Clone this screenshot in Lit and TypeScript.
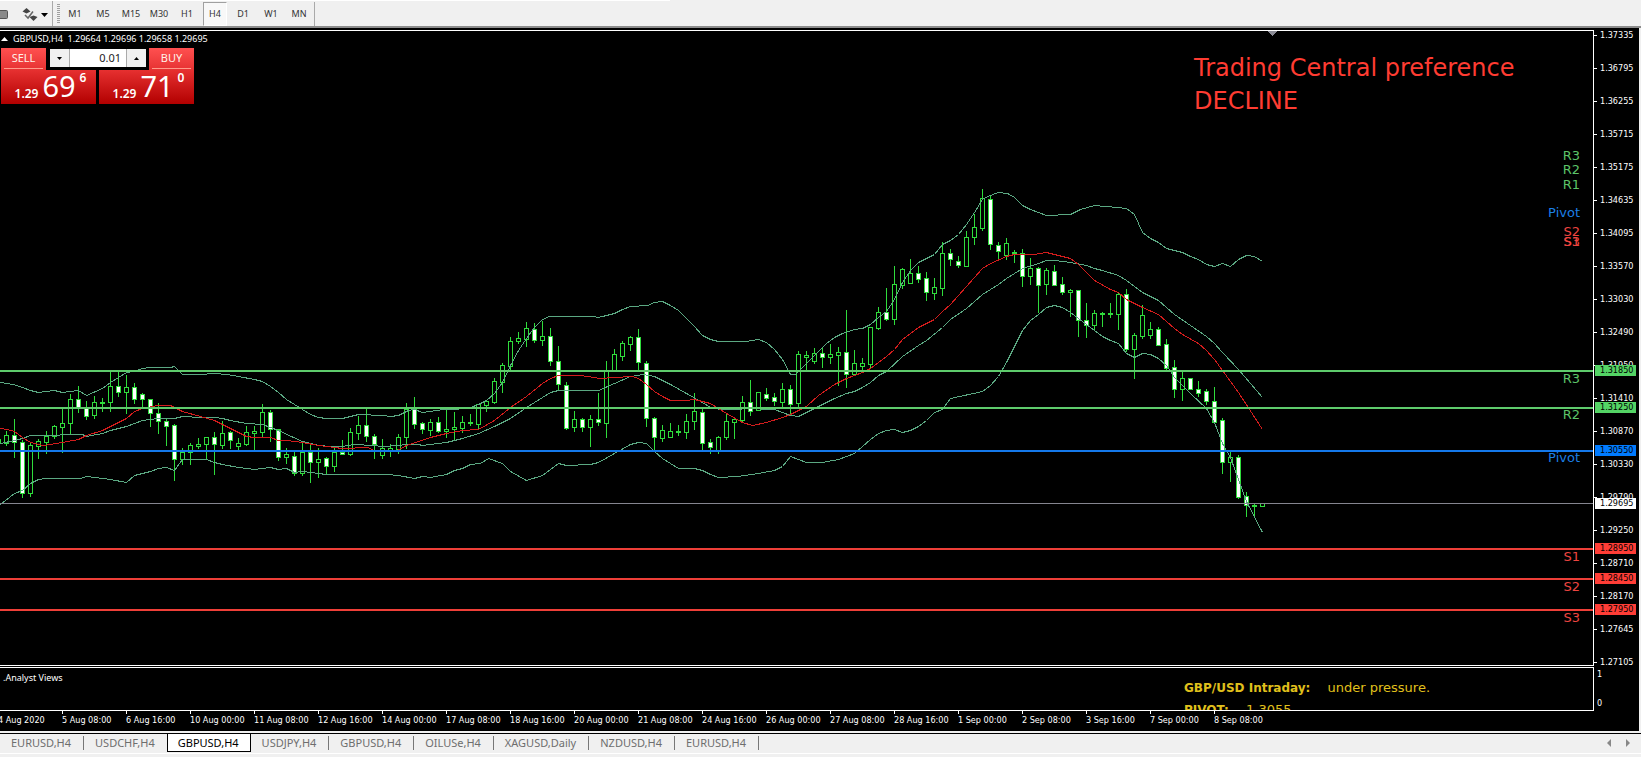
import { LitElement, html, svg, css } from "lit";
import { customElement, state } from "lit/decorators.js";
import { classMap } from "lit/directives/class-map.js";

// One bar every 8px: high, body top, body bottom, low, 1 = falling bar.
const BARS: number[][] = [
  [439,439,443,443,0],
  [431,435,443,445,0],[419,435,442,457,1],[440,442,493,497,1],[442,445,493,496,0],[439,441,446,458,0],
  [431,436,442,453,0],[425,426,436,438,0],[408,423,427,452,0],[394,399,423,433,0],[386,399,407,412,1],
  [401,408,416,419,1],[396,402,415,418,0],[398,402,403,411,0],[371,386,402,411,0],[371,386,392,396,1],
  [375,387,392,413,0],[383,387,399,403,1],[393,394,399,408,1],[399,399,413,426,1],[403,413,421,433,1],
  [418,421,426,445,1],[424,425,459,480,1],[448,452,459,464,0],[443,445,452,464,0],[438,444,446,448,0],
  [437,437,444,458,0],[432,437,444,474,1],[421,433,445,448,0],[431,432,440,448,1],[438,443,446,449,0],
  [426,432,444,445,0],[426,431,433,451,0],[404,412,432,436,0],[410,412,429,441,1],[429,429,457,460,1],
  [448,454,457,463,0],[451,456,473,475,1],[443,452,473,475,0],[443,452,462,482,1],[448,459,462,477,0],
  [457,458,466,473,1],[448,452,466,471,0],[440,452,454,454,1],[428,432,454,455,0],[416,425,433,439,0],
  [409,425,436,441,1],[434,436,444,458,1],[439,448,455,458,0],[444,448,450,456,0],[434,437,449,453,0],
  [403,409,437,448,0],[397,409,424,428,1],[422,423,429,433,1],[419,422,430,435,0],[417,422,431,432,1],
  [410,429,431,437,0],[412,427,429,440,0],[416,422,428,432,0],[414,422,423,425,0],[404,404,424,428,0],
  [400,401,405,411,0],[378,381,402,403,0],[363,365,382,392,0],[337,341,366,370,0],[332,338,341,343,0],
  [322,328,339,346,0],[323,329,340,342,1],[321,336,340,345,0],[328,336,361,365,1],[346,361,384,389,1],
  [382,385,428,429,1],[411,419,427,431,0],[418,419,427,431,1],[415,419,427,446,0],[393,419,422,425,1],
  [361,371,423,437,0],[349,354,371,371,0],[341,343,356,360,0],[336,337,344,350,0],[329,337,362,370,1],
  [361,363,418,426,1],[417,418,437,450,1],[425,430,438,441,0],[423,431,437,437,0],[425,431,432,435,0],
  [414,421,432,438,0],[393,411,421,429,0],[409,412,443,449,1],[439,442,447,453,1],[436,437,451,453,0],
  [414,421,437,439,0],[418,419,422,438,0],[396,402,420,422,0],[380,402,411,415,1],[392,392,410,410,0],
  [388,394,398,400,1],[393,397,401,405,1],[383,389,402,407,0],[385,389,404,415,1],[351,354,403,406,0],
  [351,355,357,369,0],[348,353,361,363,0],[348,353,357,367,1],[344,354,357,363,0],[347,352,355,385,0],
  [310,352,374,387,1],[350,363,374,375,0],[358,363,366,370,0],[327,327,364,367,0],[307,312,328,329,0],
  [288,312,319,320,1],[266,284,319,324,0],[268,269,285,288,0],[259,273,283,283,0],[266,273,279,282,1],
  [272,278,292,300,1],[278,287,293,299,0],[242,253,288,295,0],[249,253,259,265,1],[256,261,265,267,1],
  [231,237,266,266,0],[214,227,237,244,0],[189,198,228,230,0],[195,199,244,249,1],[242,245,251,258,1],
  [238,243,255,259,0],[250,252,253,262,0],[249,253,276,286,1],[258,268,276,284,0],[267,268,285,312,1],
  [268,270,284,294,0],[265,271,285,285,1],[277,284,292,294,1],[289,290,292,316,0],[290,290,320,336,1],
  [303,320,325,337,1],[310,313,325,329,0],[312,313,314,326,0],[303,313,314,317,0],[292,294,314,329,0],
  [289,294,349,351,1],[333,335,349,378,0],[305,315,336,338,0],[322,329,335,338,0],[327,329,345,345,1],
  [339,344,368,370,1],[360,367,389,397,1],[372,378,389,400,0],[378,378,389,389,1],[381,389,393,396,1],
  [389,391,401,404,1],[387,401,422,422,1],[418,420,462,473,1],[452,457,462,481,0],[455,457,497,498,1],
  [492,496,505,516,1],[503,505,506,515,0],[503,503,506,506,0],
];

const UPPER = "0,382 13,384 22,387 30,390 38,392 54,390 62,392 78,390 86,395 102,388 110,382 126,372 134,371 142,368 150,367 170,367 174,366 182,374 200,374 214,373 227,374 238,376 254,379 262,381 270,386 278,392 286,399 302,409 310,414 318,417 326,418 342,418 358,414 382,415 390,416 398,415 408,410 414,409 422,412 443,409 455,409 470,407 478,404 486,400 494,393 502,382 510,365 518,350 526,338 534,327 542,319 549,316 593,316 598,317 614,313 622,309 630,306 647,305 654,302 662,301 670,305 678,310 686,318 694,326 702,335 710,339 718,341 745,341 758,339 766,342 774,349 782,359 790,374 795,374 803,366 818,351 826,343 834,337 842,333 854,329 862,328 870,324 878,317 886,311 894,299 902,282 910,270 918,262 934,254 942,244 950,240 958,234 966,224 974,212 982,199 987,196 998,192 1007,193 1014,197 1022,205 1030,209 1038,212 1046,215 1070,214 1080,209 1094,205 1117,207 1126,208 1134,214 1142,232 1150,238 1158,242 1166,248 1182,252 1190,256 1198,259 1206,264 1214,266 1222,263 1230,266 1238,259 1246,255 1254,256 1262,261";
const MIDDLE = "0,443 14,440 22,438 30,435 38,435 82,434 86,436 102,433 110,430 126,426 142,420 158,418 174,418 182,416 200,417 214,417 222,418 230,420 246,423 262,424 278,430 293,437 302,441 318,445 330,446 342,446 353,444 373,445 382,446 397,445 407,444 418,444 422,445 430,444 446,442 462,438 478,433 494,426 510,418 526,407 534,402 542,397 550,392 558,390 598,390 614,383 630,376 643,374 654,376 670,384 686,393 702,402 710,407 720,409 737,409 747,408 774,409 782,412 790,415 798,416 806,412 814,408 834,398 846,393 854,391 862,387 870,382 878,375 886,371 902,356 918,345 926,340 942,327 950,319 966,308 982,294 998,284 1006,278 1022,268 1038,263 1046,260 1054,260 1070,262 1086,265 1094,268 1102,270 1118,275 1126,280 1142,292 1158,300 1174,314 1190,325 1206,336 1214,343 1222,352 1238,369 1262,397";
const LOWER = "0,504 14,493 22,490 30,483 38,479 46,478 80,478 86,476 110,479 126,482 134,475 150,471 158,468 166,467 174,470 182,459 206,459 214,462 222,464 238,467 254,469 270,467 278,469 286,468 294,472 302,471 326,474 342,474 387,474 398,475 414,478 422,476 430,477 446,474 454,470 462,468 470,464 480,463 488,458 502,463 510,471 526,480 542,475 550,469 558,463 566,465 590,464 598,462 614,453 630,444 638,442 646,443 654,451 662,458 670,463 678,468 694,468 702,470 710,474 718,477 737,476 758,473 774,470 782,466 790,456 798,459 806,462 822,462 838,459 854,453 862,446 870,439 878,433 886,430 894,429 902,432 910,430 918,426 926,420 934,412 942,409 950,398 982,391 990,385 998,376 1006,362 1014,346 1022,330 1030,320 1038,314 1046,307 1054,305 1062,307 1070,312 1078,318 1086,324 1094,330 1102,336 1110,340 1118,343 1126,353 1134,357 1142,353 1150,354 1158,358 1166,365 1174,377 1190,393 1206,408 1214,422 1222,443 1230,457 1238,479 1246,501 1262,532";
const AVERAGE = "0,428 7,429 14,431 22,437 30,442 43,445 62,442 78,439 86,435 102,430 126,418 134,411 142,408 157,405 170,405 182,411 200,416 214,420 230,428 238,432 246,436 254,437 270,437 278,440 286,440 302,442 318,445 342,448 367,447 374,450 397,450 406,445 430,437 446,433 462,430 478,429 494,420 510,407 526,396 542,383 550,378 558,375 580,375 587,376 600,378 614,377 632,376 638,378 646,384 654,391 662,396 670,400 686,400 694,399 710,403 726,413 742,422 752,425 766,422 782,417 790,414 806,406 818,395 834,384 846,378 862,372 870,368 886,356 894,349 902,339 918,327 934,319 942,311 950,304 958,295 974,277 982,268 990,263 1006,256 1014,254 1033,254 1046,252 1054,254 1070,258 1078,264 1094,280 1110,289 1118,292 1126,299 1142,307 1158,314 1174,328 1182,334 1198,343 1206,350 1214,359 1222,370 1238,392 1262,429";

type Level = { kind: string; name: string; price: string; y: number };
const LEVELS: Level[] = [
  { kind: "res", name: "R3", price: "1.31850", y: 371 },
  { kind: "res", name: "R2", price: "1.31250", y: 408 },
  { kind: "piv", name: "Pivot", price: "1.30550", y: 451 },
  { kind: "bid", name: "", price: "1.29695", y: 504 },
  { kind: "sup", name: "S1", price: "1.28950", y: 549 },
  { kind: "sup", name: "S2", price: "1.28450", y: 579 },
  { kind: "sup", name: "S3", price: "1.27950", y: 610 },
];

const PINS = [
  { kind: "res", name: "R3", y: 156 }, { kind: "res", name: "R2", y: 170 }, { kind: "res", name: "R1", y: 185 },
  { kind: "piv", name: "Pivot", y: 213 },
  { kind: "sup", name: "S2", y: 232 }, { kind: "sup", name: "S3", y: 242 }, { kind: "sup", name: "S1", y: 242 },
  { kind: "res", name: "R3", y: 379 }, { kind: "res", name: "R2", y: 415 }, { kind: "piv", name: "Pivot", y: 458 },
  { kind: "sup", name: "S1", y: 557 }, { kind: "sup", name: "S2", y: 587 }, { kind: "sup", name: "S3", y: 618 },
];

const PRICES = ["1.37335","1.36795","1.36255","1.35715","1.35175","1.34635","1.34095","1.33570","1.33030","1.32490","1.31950","1.31410","1.30870","1.30330","1.29790","1.29250","1.28710","1.28170","1.27645","1.27105"];
const TIMES = ["4 Aug 2020","5 Aug 08:00","6 Aug 16:00","10 Aug 00:00","11 Aug 08:00","12 Aug 16:00","14 Aug 00:00","17 Aug 08:00","18 Aug 16:00","20 Aug 00:00","21 Aug 08:00","24 Aug 16:00","26 Aug 00:00","27 Aug 08:00","28 Aug 16:00","1 Sep 00:00","2 Sep 08:00","3 Sep 16:00","7 Sep 00:00","8 Sep 08:00"];
const FRAMES = ["M1","M5","M15","M30","H1","H4","D1","W1","MN"];
const TABS = ["EURUSD,H4","USDCHF,H4","GBPUSD,H4","USDJPY,H4","GBPUSD,H4","OILUSe,H4","XAGUSD,Daily","NZDUSD,H4","EURUSD,H4"];

// Screen y of the first row inside the plot and of the top of the price scale.
const PLOT_TOP = 31;
const SCALE_TOP = 30;

const reset = css`
  * { box-sizing: border-box; }
  button, input { font: inherit; color: inherit; margin: 0; padding: 0; border: 0; border-radius: 0; background: none; }
  ul { list-style: none; margin: 0; padding: 0; }
  svg { display: block; }
`;

@customElement("period-toolbar")
export class PeriodToolbar extends LitElement {
  @state() private active = "H4";

  static styles = [reset, css`
    :host { display: block; background: #f0f0f0; border-bottom: 2px solid #8c8c8c; }
    .bar { display: flex; align-items: center; width: 670px; max-width: 100%; height: 26px; border-top: 1px solid #fff; color: #333; font: 9px/12px "Noto Sans", sans-serif; }
    .tools { width: 53px; height: 25px; border-right: 1px solid #a9a9a9; }
    .grip { width: 3px; height: 20px; margin: 0 3px 0 4px; background: repeating-linear-gradient(#a0a0a0 0 1px, #f0f0f0 1px 2px); }
    .frames { display: flex; gap: 4px; padding-right: 3px; border-right: 1px solid #a9a9a9; }
    .frame { width: 24px; height: 24px; border: 1px solid transparent; }
    .on { background: #f8f8f8; border-color: #a0a0a0 #fff #fff #a0a0a0; }
  `];

  render() {
    return html`
      <nav class="bar" aria-label="Chart periods">
        <button class="tools" aria-label="Arrange objects">
          <svg width="52" height="25">
            <rect x="-2" y="9.5" width="9.500" height="8" rx="1" fill="#8a8a8a" stroke="#555"/>
            <path d="M22.500 10.500 26.500 7 30.500 10.500 26.500 12.500ZM29.500 16 33.500 14.500 37.500 16 33.500 20Z" fill="#444"/>
            <path d="M25 14l3 3 5-6.500" fill="none" stroke="#666" stroke-width="1.500"/>
            <path d="M41 12h7l-3.500 4z" fill="#000"/>
          </svg>
        </button>
        <span class="grip"></span>
        <div class="frames">
          ${FRAMES.map(f => html`<button class=${classMap({ frame: true, on: f === this.active })} @click=${() => (this.active = f)}>${f}</button>`)}
        </div>
      </nav>`;
  }
}

@customElement("trade-panel")
export class TradePanel extends LitElement {
  @state() private lots = 0.01;

  static styles = [reset, css`
    :host { display: block; width: 193px; color: #fff; font: 11px/20px "Noto Sans", sans-serif; }
    .panel { position: relative; display: grid; grid-template-columns: 95px 95px; gap: 3px; }
    .deal { display: flex; flex-direction: column; align-items: flex-start; }
    .buy { align-items: flex-end; }
    .side { width: 45px; height: 22px; padding-bottom: 1px; background: linear-gradient(#ff5050, #e63232); color: #fff0e8; }
    .rate { display: flex; justify-content: center; width: 95px; height: 34px; padding-left: 4px; background: linear-gradient(#e63030, #b20000); }
    .side::after { content: ""; display: block; height: 1px; margin: 0 3px; background: #ff9a8a; }
    .big { font-size: 12px; line-height: 16px; font-weight: 600; align-self: flex-end; padding-bottom: 2px; }
    .pips { font-size: 29px; line-height: 32px; margin: 0 4px; }
    .tenth { font-size: 12px; line-height: 16px; font-weight: 600; }
    .volume { position: absolute; left: 47px; top: 0; display: flex; width: 99px; height: 21px; padding: 1px 1px 2px 2px; background: #000; color: #222; }
    .step { width: 19px; background: #f0f0f0; display: grid; place-items: center; }
    .lots { flex: 1; min-width: 0; padding-right: 5px; text-align: right; background: #fff; border: solid #aaa; border-width: 0 1px; }
  `];

  private bump(by: number) {
    this.lots = Math.max(0.01, this.lots + by);
  }

  render() {
    return html`
      <div class="panel">
        <button class="deal"><span class="side">SELL</span><span class="rate"><span class="big">1.29</span><span class="pips">69</span><span class="tenth">6</span></span></button>
        <button class="deal buy"><span class="side">BUY</span><span class="rate"><span class="big">1.29</span><span class="pips">71</span><span class="tenth">0</span></span></button>
        <div class="volume">
          <button class="step" aria-label="Less" @click=${() => this.bump(-0.01)}><svg width="5" height="3"><path d="M0 0h5l-2.500 3z"/></svg></button>
          <input class="lots" type="text" aria-label="Volume" .value=${this.lots.toFixed(2)}>
          <button class="step" aria-label="More" @click=${() => this.bump(0.01)}><svg width="5" height="3"><path d="M0 3h5l-2.500-3z"/></svg></button>
        </div>
      </div>`;
  }
}

@customElement("chart-window")
export class ChartWindow extends LitElement {
  static styles = [reset, css`
    :host { display: grid; grid-template-columns: minmax(0, 1fr) 45px; margin-right: 2px; padding-top: 2px; background: #000; color: #fff; overflow: hidden; font: 9px/11px "DejaVu Sans Condensed", "DejaVu Sans", sans-serif; }
    .plot { position: relative; border: solid #fff; border-width: 1px 1px 1px 0; overflow: hidden; }
    .canvas { width: 100%; height: 634px; shape-rendering: crispEdges; }
    .band { fill: none; stroke: #5ba882; }
    .avg { fill: none; stroke: #d21c1c; }
    .bar { stroke: #2fdc3c; fill: #000; }
    .fall { fill: #fff; }
    .line-res { stroke: #5ecb6c; stroke-width: 2; }
    .line-piv { stroke: #1478ea; stroke-width: 2; }
    .line-sup { stroke: #ee3f38; stroke-width: 2; }
    .line-bid { stroke: #85858f; }
    .head { position: absolute; left: 1px; top: 2px; display: flex; align-items: center; gap: 5px; white-space: pre; font-family: "Noto Sans", sans-serif; }
    .trade { position: absolute; left: 1px; top: 17px; }
    .call { position: absolute; top: 21px; right: 0; width: 399px; margin: 0; color: #ff3c32; font: 24px/33px "DejaVu Sans", sans-serif; }
    .pin { position: absolute; right: 13px; font: 13px/16px "DejaVu Sans", sans-serif; }
    .res { color: #5cc468; }
    .piv { color: #1b7fe6; }
    .sup { color: #ee4540; }
    .scale { position: relative; margin-bottom: -2px; }
    .prices { display: grid; gap: 22px; }
    .price { display: flex; align-items: center; gap: 3px; height: 11px; }
    .price::before { content: ""; width: 3px; height: 1px; background: #fff; }
    .tag { position: absolute; left: 1px; width: 41px; padding-left: 5px; color: #000; }
    .tag-res { background: #54d465; }
    .tag-piv { background: #007bff; }
    .tag-sup { background: #ff3d36; }
    .tag-bid { background: #fff; }
    .views { position: relative; height: 44px; margin-top: 1px; padding: 4px 3px; border: solid #fff; border-width: 1px 1px 1px 0; overflow: hidden; font-family: "Noto Sans", sans-serif; }
    .range { display: flex; flex-direction: column; justify-content: space-between; height: 44px; padding: 3px 3px 1px; }
    .advice { position: absolute; top: 9px; right: 0; width: 409px; margin: 0; color: #e0c01c; font: 13px/22px "DejaVu Sans", sans-serif; }
    .advice dt, .advice dd { display: inline; margin: 0; }
    .advice dt { font-weight: 700; font-size: 12px; margin-right: 13px; }
    .times { display: flex; height: 20px; margin-left: -2px; }
    .time { flex: 0 0 64px; white-space: nowrap; }
    .time::before { content: ""; display: block; width: 1px; height: 3px; margin-bottom: 1px; background: #fff; }
  `];

  private bar([high, top, bottom, low, falling]: number[], i: number) {
    const x = i * 8 - 1.5;
    return svg`<path class=${classMap({ bar: true, fall: !!falling })} d="M${x} ${high}V${low + 1}"/><rect class=${classMap({ bar: true, fall: !!falling })} x=${x - 2} y=${top + 0.5} width="4" height=${bottom - top}/>`;
  }

  render() {
    return html`
      <section class="plot">
        <svg class="canvas" role="img" aria-label="GBPUSD four-hour candles">
          <g transform="translate(0 ${-PLOT_TOP})">
            ${BARS.map((b, i) => this.bar(b, i))}
            <g transform="translate(0.5 0.5)">
              <polyline class="band" points=${UPPER}/>
              <polyline class="band" points=${MIDDLE}/>
              <polyline class="band" points=${LOWER}/>
              <polyline class="avg" points=${AVERAGE}/>
            </g>
            ${LEVELS.map(l => {
              const y = l.kind === "bid" ? l.y - 0.5 : l.y;
              return svg`<line class="line-${l.kind}" x1="0" x2="100%" y1=${y} y2=${y}/>`;
            })}
            <path d="M1268 31h9l-4.500 5z" fill="#8c8c96"/>
          </g>
        </svg>
        <div class="head"><svg width="7" height="4"><path d="M0 4h7L3.500 0z" fill="#fff"/></svg><span>GBPUSD,H4  1.29664 1.29696 1.29658 1.29695</span></div>
        <trade-panel class="trade"></trade-panel>
        <p class="call">Trading Central preference<br>DECLINE</p>
        ${PINS.map(p => html`<span class="pin ${p.kind}" style="top:${p.y - PLOT_TOP - 8}px">${p.name}</span>`)}
      </section>
      <aside class="scale">
        <ul class="prices">${PRICES.map(p => html`<li class="price">${p}</li>`)}</ul>
        ${LEVELS.map(l => html`<span class="tag tag-${l.kind}" style="top:${l.y - SCALE_TOP - 6}px">${l.price}</span>`)}
      </aside>
      <section class="views">
        .Analyst Views
        <dl class="advice">
          <div><dt>GBP/USD Intraday:</dt> <dd>under pressure.</dd></div>
          <div><dt>PIVOT:</dt> <dd>1.3055</dd></div>
        </dl>
      </section>
      <div class="range"><span>1</span><span>0</span></div>
      <ul class="times">${TIMES.map(t => html`<li class="time">${t}</li>`)}</ul>`;
  }
}

@customElement("chart-tabs")
export class ChartTabs extends LitElement {
  @state() private active = 2;

  static styles = [reset, css`
    :host { display: block; padding-top: 2px; background: #f0f0f0; }
    .strip { display: flex; align-items: flex-start; height: 20px; border-top: 1px solid #000; color: #6e6e6e; font: 11px/16px "Noto Sans", sans-serif; }
    .tab { display: flex; align-items: center; height: 18px; padding-left: 11px; white-space: nowrap; }
    .tab::after { content: ""; width: 1px; height: 14px; margin-left: 12px; background: #777; }
    .on { margin-left: -1px; padding-left: 10px; background: #fff; color: #000; border: solid #000; border-width: 0 1px 1px; }
    .on::after { width: 0; margin-left: 11px; }
    .scroll { display: flex; gap: 14px; margin: 5px 10px 0 auto; }
    .foot { height: 4px; border-top: 1px solid #fff; }
  `];

  render() {
    return html`
      <nav class="strip" aria-label="Open charts">
        ${TABS.map((t, i) => html`<button class=${classMap({ tab: true, on: i === this.active })} @click=${() => (this.active = i)}>${t}</button>`)}
        <div class="scroll">
          <button aria-label="Previous"><svg width="5" height="8"><path d="M4 0v8L0 4z" fill="#888"/></svg></button>
          <button aria-label="Next"><svg width="5" height="8"><path d="M0 0v8l4-4z" fill="#888"/></svg></button>
        </div>
      </nav>
      <div class="foot"></div>`;
  }
}

@customElement("app-root")
export class AppRoot extends LitElement {
  static styles = css`
    :host { display: block; min-height: 100vh; background: #f0f0f0; }
  `;

  render() {
    return html`
      <period-toolbar></period-toolbar>
      <chart-window></chart-window>
      <chart-tabs></chart-tabs>`;
  }
}
